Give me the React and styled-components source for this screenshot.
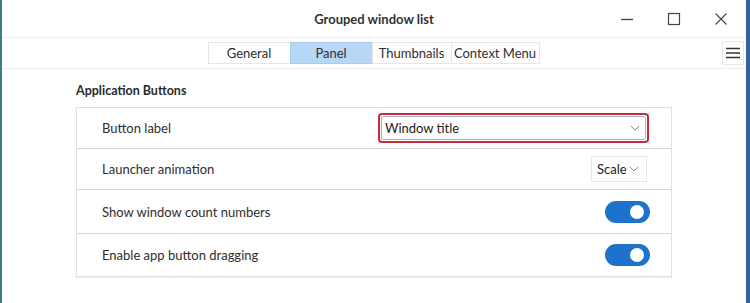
import React from "react";
import styled, { createGlobalStyle } from "styled-components";

const Global = createGlobalStyle`
  html, body { margin: 0; padding: 0; background: #ffffff; }
  body { font-family: Lato, "Noto Sans", sans-serif; font-size: 13px; color: #2e2e2e; }
`;

const Frame = styled.div`
  width: 750px;
  height: 303px;
  box-sizing: border-box;
  border-left: 2px solid #3f7d84;
  border-right: 4px solid #2d62a8;
  background: #ffffff;
  display: flex;
  flex-direction: column;
  overflow: hidden;
`;

const TitleBar = styled.div`
  height: 37px;
  flex: none;
  display: grid;
  grid-template-columns: 1fr auto 1fr;
  align-items: center;
  border-bottom: 1px solid #ececec;
`;

const Title = styled.div`
  font-weight: 700;
  font-size: 13px;
  color: #333;
  grid-column: 2;
`;

const Controls = styled.div`
  grid-column: 3;
  justify-self: end;
  display: flex;
  align-items: center;
  padding-right: 2px;
`;

const CtrlBtn = styled.div`
  width: 47px;
  height: 24px;
  display: flex;
  align-items: center;
  justify-content: center;
`;

const TabBar = styled.div`
  height: 30px;
  flex: none;
  display: grid;
  grid-template-columns: 1fr auto 1fr;
  align-items: center;
  border-bottom: 1px solid #ececec;
`;

const Tabs = styled.div`
  grid-column: 2;
  display: flex;
`;

const Tab = styled.div`
  width: ${(p) => p.$w}px;
  height: 22px;
  box-sizing: border-box;
  display: flex;
  align-items: center;
  justify-content: center;
  border: 1px solid ${(p) => (p.$active ? "#a9cdee" : "#e6e6e6")};
  margin-left: -1px;
  background: ${(p) => (p.$active ? "#b6d7f5" : "#ffffff")};
  color: #2e2e2e;
  font-size: 13px;
  white-space: nowrap;
`;

const MenuBtn = styled.div`
  grid-column: 3;
  justify-self: end;
  width: 22px;
  height: 24px;
  margin-right: 2px;
  box-sizing: border-box;
  border: 1px solid #e8e8e8;
  display: flex;
  align-items: center;
  justify-content: center;
`;

const Content = styled.div`
  padding: 12px 0 0 74px;
  width: 596px;
`;

const SectionTitle = styled.div`
  font-weight: 700;
  font-size: 12.5px;
  color: #2a2a2a;
  height: 20px;
  line-height: 20px;
  margin-bottom: 6px;
`;

const Card = styled.div`
  border: 1px solid #e2e2e2;
  box-shadow: 0 1px 1px rgba(0, 0, 0, 0.06);
`;

const Row = styled.div`
  height: ${(p) => p.$h}px;
  box-sizing: border-box;
  display: flex;
  align-items: center;
  justify-content: space-between;
  padding: 0 21px 0 25px;
  border-top: ${(p) => (p.$first ? "none" : "1px solid #d6d6d6")};
`;

const Label = styled.div`
  font-size: 13px;
  color: #2e2e2e;
`;

const ComboFocus = styled.div`
  width: 271px;
  height: 30px;
  box-sizing: border-box;
  border: 2px solid #c62a3d;
  border-radius: 4px;
  padding: 1px;
  margin-right: 1px;
`;

const Combo = styled.div`
  height: 100%;
  box-sizing: border-box;
  border: 1px solid #a9b3bf;
  border-radius: 2px;
  background: #fff;
  display: flex;
  align-items: center;
  justify-content: space-between;
  padding: 0 5px 0 3px;
  font-size: 13px;
  color: #222;
`;

const SmallCombo = styled.div`
  width: 56px;
  height: 26px;
  box-sizing: border-box;
  border: 1px solid #e6e6e6;
  display: flex;
  align-items: center;
  justify-content: space-between;
  padding: 0 7px 0 5px;
  margin-right: 3px;
  font-size: 13px;
  color: #222;
`;

const Switch = styled.div`
  width: 45px;
  height: 22px;
  border-radius: 11px;
  background: #1d73cc;
  position: relative;
  &::after {
    content: "";
    position: absolute;
    right: 6px;
    top: 4px;
    width: 14px;
    height: 14px;
    border-radius: 50%;
    background: #ffffff;
  }
`;

const Chevron = () => (
  <svg width="10" height="6" viewBox="0 0 10 6">
    <path d="M1 1l4 4 4-4" fill="none" stroke="#8a8a8a" strokeWidth="1" />
  </svg>
);

export default function App() {
  return (
    <>
      <Global />
      <Frame>
        <TitleBar>
          <Title>Grouped window list</Title>
          <Controls>
            <CtrlBtn>
              <svg width="14" height="14" viewBox="0 0 14 14">
                <path d="M1 7.5h12" stroke="#444" strokeWidth="1.3" />
              </svg>
            </CtrlBtn>
            <CtrlBtn>
              <svg width="14" height="14" viewBox="0 0 14 14">
                <rect x="1.5" y="1.5" width="11" height="11" fill="none" stroke="#444" strokeWidth="1.2" />
              </svg>
            </CtrlBtn>
            <CtrlBtn>
              <svg width="14" height="14" viewBox="0 0 14 14">
                <path d="M1.5 1.5l11 11M12.5 1.5l-11 11" stroke="#444" strokeWidth="1.1" />
              </svg>
            </CtrlBtn>
          </Controls>
        </TitleBar>
        <TabBar>
          <Tabs>
            <Tab $w={83}>General</Tab>
            <Tab $w={83} $active>Panel</Tab>
            <Tab $w={80}>Thumbnails</Tab>
            <Tab $w={89}>Context Menu</Tab>
          </Tabs>
          <MenuBtn>
            <svg width="14" height="12" viewBox="0 0 14 12">
              <path d="M0 1.5h14M0 6h14M0 10.5h14" stroke="#333" strokeWidth="1.6" />
            </svg>
          </MenuBtn>
        </TabBar>
        <Content>
          <SectionTitle>Application Buttons</SectionTitle>
          <Card>
            <Row $h={40} $first>
              <Label>Button label</Label>
              <ComboFocus>
                <Combo>
                  <span>Window title</span>
                  <Chevron />
                </Combo>
              </ComboFocus>
            </Row>
            <Row $h={41}>
              <Label>Launcher animation</Label>
              <SmallCombo>
                <span>Scale</span>
                <Chevron />
              </SmallCombo>
            </Row>
            <Row $h={44}>
              <Label>Show window count numbers</Label>
              <Switch />
            </Row>
            <Row $h={43}>
              <Label>Enable app button dragging</Label>
              <Switch />
            </Row>
          </Card>
        </Content>
      </Frame>
    </>
  );
}
